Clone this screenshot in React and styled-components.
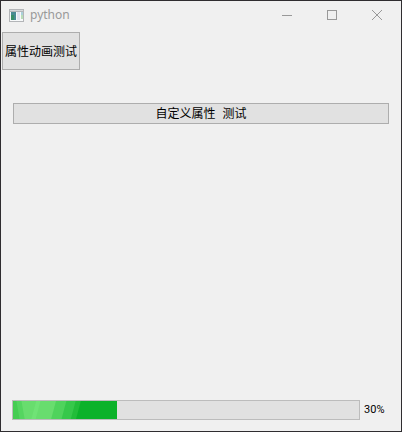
import { useState } from "react";
import styled, { createGlobalStyle } from "styled-components";

const GlobalStyles = createGlobalStyle`
  * {
    box-sizing: border-box;
  }

  body {
    margin: 0;
    background: #f0f0f0;
  }
`;

const Window = styled.div`
  display: flex;
  flex-direction: column;
  min-height: 100vh;
  border: 1px solid #2f2d30;
  background: #f0f0f0;
  color: #000;
  font-family: "Liberation Mono", "Noto Sans CJK SC", monospace;
  font-size: 12px;
`;

const TitleBar = styled.header`
  display: flex;
  align-items: center;
  height: 30px;
  padding: 0 2px 2px 8px;
`;

const Title = styled.h1`
  flex: 1;
  margin: 0 0 0 6px;
  color: #999;
  font-family: "Noto Sans", sans-serif;
  font-size: 12px;
  font-weight: 400;
  line-height: 16px;
`;

const CaptionButton = styled.button`
  display: flex;
  align-items: center;
  justify-content: center;
  width: 45px;
  height: 28px;
  padding: 0;
  border: 0;
  background: transparent;
  color: #999;

  &:hover {
    background: #e1e1e1;
  }
`;

const Content = styled.main`
  display: flex;
  flex: 1;
  flex-direction: column;
  padding: 1px;
`;

const PushButton = styled.button`
  align-self: ${(props) => (props.$wide ? "stretch" : "flex-start")};
  height: ${(props) => (props.$wide ? "21px" : "38px")};
  margin: ${(props) => (props.$wide ? "33px 11px 0" : "0")};
  padding: 3px 2px 0;
  border: 1px solid #adadad;
  background: #e1e1e1;
  color: inherit;
  font: inherit;
  line-height: 16px;
`;

const ProgressRow = styled.label`
  display: flex;
  align-items: center;
  gap: 4px;
  margin-top: auto;
  padding: 0 16px 10px 10px;
`;

const ProgressBar = styled.progress`
  flex: 1;
  min-width: 0;
  height: 20px;
  appearance: none;
  border: 1px solid #bcbcbc;
  background: #e1e1e1;

  &::-webkit-progress-bar {
    background: #e1e1e1;
  }

  &::-webkit-progress-value {
    background:
      linear-gradient(
        80deg,
        #46cd53 0 6px,
        #55d560 7px 11px,
        transparent 12px
      ),
      linear-gradient(
        105deg,
        #68dd6e 0 22px,
        #70e376 23px 26px,
        #68dd6e 27px 41px,
        #4fd35c 42px 51px,
        #36c84a 52px 60px,
        #22bd39 61px 65px,
        #0cb22a 66px
      );
  }
`;

const ProgressText = styled.span`
  width: 20px;
  font-family: Roboto, sans-serif;
  font-size: 11px;
  line-height: 16px;
`;

function App() {
  const [progress, setProgress] = useState(30);

  return (
    <>
      <GlobalStyles />
      <Window>
        <TitleBar>
          <svg width="15" height="13" shapeRendering="crispEdges">
            <path d="M0 0h15v13H0z" fill="#b3b5b8" />
            <path d="M1 1h13v1H1z" fill="#d7d9db" />
            <path d="M1 3h13v9H1z" fill="#f7f9fa" />
            <path d="M2 3h5v8H2z" fill="#4a8b93" />
            <path d="M2 6h3v5H2z" fill="#398f68" />
            <path d="M8 3h3v8H8z" fill="#e1e4ee" />
            <path d="M12 3h2v3h-2z" fill="#a9d0da" />
            <path d="M12 6h2v4h-2z" fill="#b9ddb8" />
          </svg>
          <Title>python</Title>
          <CaptionButton aria-label="Minimize">
            <svg width="10" height="10" shapeRendering="crispEdges">
              <path d="M0 5h10v1H0z" fill="currentColor" />
            </svg>
          </CaptionButton>
          <CaptionButton aria-label="Maximize">
            <svg width="10" height="10" shapeRendering="crispEdges">
              <path d="M.5.5h9v9h-9z" fill="none" stroke="currentColor" />
            </svg>
          </CaptionButton>
          <CaptionButton aria-label="Close">
            <svg width="10" height="10">
              <path d="M0 0l10 10M10 0L0 10" stroke="currentColor" />
            </svg>
          </CaptionButton>
        </TitleBar>
        <Content>
          <PushButton onClick={() => setProgress(0)}>属性动画测试</PushButton>
          <PushButton
            $wide
            onClick={() => setProgress((value) => Math.min(value + 10, 100))}
          >
            自定义属性 测试
          </PushButton>
          <ProgressRow>
            <ProgressBar value={progress} max="100" />
            <ProgressText>{progress}%</ProgressText>
          </ProgressRow>
        </Content>
      </Window>
    </>
  );
}

export default App;
